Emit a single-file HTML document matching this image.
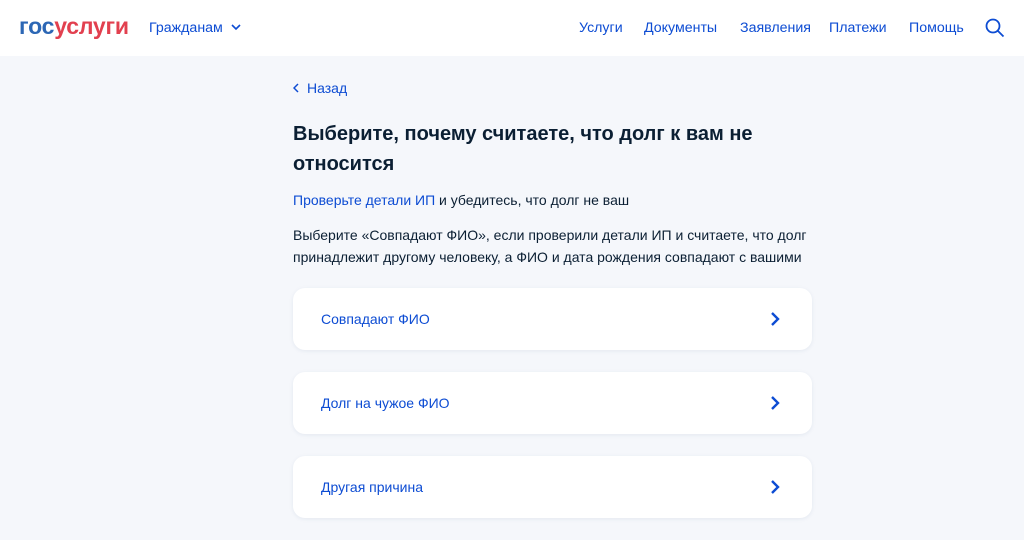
<!DOCTYPE html>
<html><head><meta charset="utf-8"><style>
*{margin:0;padding:0;box-sizing:border-box}
body{width:1024px;height:540px;overflow:hidden;background:#f5f7fb;font-family:"Liberation Sans",sans-serif;color:#0b1f33}
.hdr{position:absolute;left:0;top:0;width:1024px;height:56px;background:#fff}
.logo{position:absolute;left:19px;top:13px;font-size:23px;font-weight:bold;letter-spacing:-0.2px}
.logo .a{color:#2c67b5}.logo .b{color:#e2404f}
.nav{position:absolute;top:20px;font-size:14.2px;color:#0d4cd3}
.card{position:absolute;left:293px;width:519px;height:62px;background:#fff;border-radius:12px;box-shadow:0 1px 4px rgba(30,60,120,.08)}
.card span{position:absolute;left:28px;top:23px;font-size:14px;color:#0d4cd3}
.card svg{position:absolute;right:32px;top:23px}
p{position:absolute;left:293px;font-size:14px;line-height:22px}
</style></head><body>
<div class="hdr">
<div class="logo"><span class="a">гос</span><span class="b">услуги</span></div>
<div class="nav" style="left:149px">Гражданам</div>
<svg style="position:absolute;left:231px;top:24px" width="10" height="7" viewBox="0 0 10 7"><path d="M1 1l4 4 4-4" fill="none" stroke="#0d4cd3" stroke-width="1.6"/></svg>
<div class="nav" style="left:579px">Услуги</div>
<div class="nav" style="left:644px">Документы</div>
<div class="nav" style="left:740px">Заявления</div>
<div class="nav" style="left:829px">Платежи</div>
<div class="nav" style="left:909px">Помощь</div>
<svg style="position:absolute;left:985px;top:18px" width="20" height="20" viewBox="0 0 20 20"><circle cx="8" cy="8" r="6.5" fill="none" stroke="#0d4cd3" stroke-width="1.8"/><path d="M13 13l5.5 5.5" stroke="#0d4cd3" stroke-width="1.8"/></svg>
</div>
<svg style="position:absolute;left:293px;top:83px" width="6" height="10" viewBox="0 0 6 10"><path d="M5 1L1 5l4 4" fill="none" stroke="#0d4cd3" stroke-width="1.5"/></svg>
<div style="position:absolute;left:307px;top:80px;font-size:14px;color:#0d4cd3">Назад</div>
<div style="position:absolute;left:293px;top:119px;width:500px;font-size:20px;font-weight:bold;line-height:30px">Выберите, почему считаете, что долг к вам не относится</div>
<p style="top:189px"><span style="color:#0d4cd3">Проверьте детали ИП</span> и убедитесь, что долг не ваш</p>
<p style="top:224px;width:530px">Выберите «Совпадают ФИО», если проверили детали ИП и считаете, что долг принадлежит другому человеку, а ФИО и дата рождения совпадают с вашими</p>
<div class="card" style="top:288px"><span>Совпадают ФИО</span><svg width="10" height="16" viewBox="0 0 10 16"><path d="M2 2l6 6-6 6" fill="none" stroke="#0d4cd3" stroke-width="2.4"/></svg></div>
<div class="card" style="top:372px"><span>Долг на чужое ФИО</span><svg width="10" height="16" viewBox="0 0 10 16"><path d="M2 2l6 6-6 6" fill="none" stroke="#0d4cd3" stroke-width="2.4"/></svg></div>
<div class="card" style="top:456px"><span>Другая причина</span><svg width="10" height="16" viewBox="0 0 10 16"><path d="M2 2l6 6-6 6" fill="none" stroke="#0d4cd3" stroke-width="2.4"/></svg></div>
</body></html>
